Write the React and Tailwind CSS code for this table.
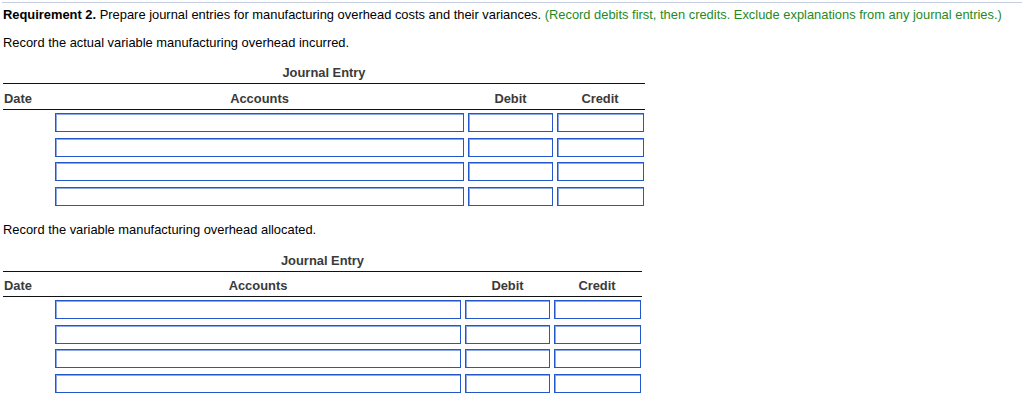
const inputCls =
  'block h-[19px] border border-[#2457c9] bg-white shadow-[inset_1px_1px_0_#8ba7e6]';

function JournalTable({ cols, widths, headPad, gaps }) {
  const template = cols.map((c) => `${c}px`).join(' ');
  return (
    <div style={{ width: cols.reduce((a, b) => a + b, 0) }} className="ml-[3px]">
      <div className="pb-[3px] text-center text-[12.9px] font-bold leading-[15px] text-[#3a3a3a]">
        Journal Entry
      </div>
      <div
        className="grid border-y border-[#111] text-[12.9px] font-bold leading-[15px] text-[#3a3a3a]"
        style={{ gridTemplateColumns: template }}
      >
        {['Date', 'Accounts', 'Debit', 'Credit'].map((h, i) => (
          <div key={h} className={i === 0 ? 'pl-[1px]' : 'text-center'} style={{ paddingTop: headPad[0], paddingBottom: headPad[1] }}>
            {h}
          </div>
        ))}
      </div>
      <div className="pt-[3px]">
        {gaps.map((g, i) => (
          <div key={i} className="grid" style={{ gridTemplateColumns: template, marginTop: g }}>
            <div />
            <div className="pl-[2px]">
              <div className={inputCls} style={{ width: widths[0] }} />
            </div>
            <div className="pl-[2px]">
              <div className={inputCls} style={{ width: widths[1] }} />
            </div>
            <div className="pl-[2px]">
              <div className={inputCls} style={{ width: widths[2] }} />
            </div>
          </div>
        ))}
      </div>
    </div>
  );
}

export default function App() {
  return (
    <div className="h-[407px] w-[1024px] overflow-hidden bg-white font-['Liberation_Sans',Arial,sans-serif] text-[12.9px] text-black">
      <div className="pt-[2px]">
        <div className="mx-[2px] h-px bg-[#c5cde0]" />
      </div>
      <p className="ml-[3px] mt-[4px] leading-[15px]">
        <span className="font-bold">Requirement 2.</span> Prepare journal entries for manufacturing
        overhead costs and their variances.{' '}
        <span className="text-[#1f8a1f]">
          (Record debits first, then credits. Exclude explanations from any journal entries.)
        </span>
      </p>
      <p className="ml-[3px] mt-[13px] leading-[15px]">
        Record the actual variable manufacturing overhead incurred.
      </p>
      <div className="mt-[15px]">
        <JournalTable
          cols={[50, 413, 89, 90]}
          widths={[409, 85, 87]}
          headPad={[7, 3]}
          gaps={[0, 6, 5, 6]}
        />
      </div>
      <p className="ml-[3px] mt-[16px] leading-[15px]">
        Record the variable manufacturing overhead allocated.
      </p>
      <div className="mt-[16px]">
        <JournalTable
          cols={[50, 410, 89, 90]}
          widths={[406, 85, 87]}
          headPad={[6, 3]}
          gaps={[0, 6, 5, 6]}
        />
      </div>
    </div>
  );
}
